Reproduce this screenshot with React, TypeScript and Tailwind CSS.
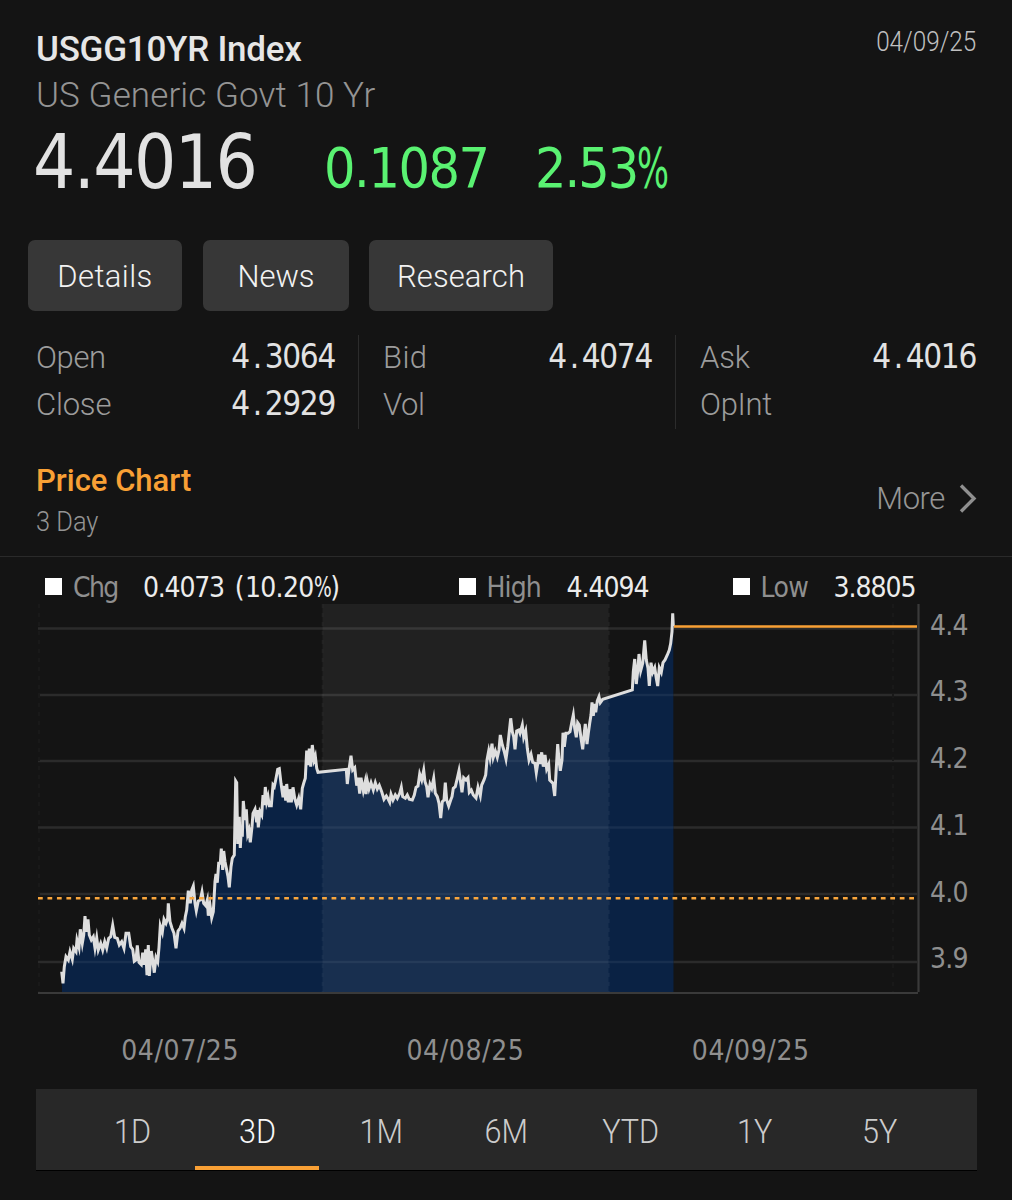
import type { ReactNode } from 'react';

const din = 'font-[Roboto,sans-serif]';
const num = "font-['DejaVu_Sans_Condensed','DejaVu_Sans',sans-serif]";

const BASE_Y = 992;

const raw: [number, number, string][] = [
  [30, 860, '95,335 99,370 103,320 108,290 115,300 120,275 127,298 131,265 138,275 141,240 147,262 151,208 157,250 161,225 165,168 169,215 174,178 178,225 184,240 190,230 195,264 200,233 205,270 212,250 218,270 224,245 230,264 236,235 242,230 248,196 254,232 262,235 268,255 275,245 282,265 288,220 296,220 302,260 308,268 313,304 318,300 322,256 327,307 334,314 338,278 343,314 347,268 351,346 355,255 358,348 364,273 368,300 373,338 378,293 383,305 387,262 391,198 397,217 402,178 408,190 413,175 415,130 420,185 426,205 432,220 438,265 444,213 450,205 456,190 462,205 466,170 470,150 475,92 481,130 485,90 490,78 495,130 499,152 505,123 511,120 516,96 521,130 527,137 532,120 535,167 540,135 545,173 550,155'],
  [180, 730, '105,455 108,432 112,458 116,400 121,400 124,356 128,420 131,363 135,395 140,420 144,440 148,472 153,410 157,385 163,375 167,153 170,158 173,342 178,260 181,354 184,300 187,320 190,213 195,270 199,238 203,312 207,300 211,337 216,290 219,250 225,238 230,277 232,240 235,292 240,245 245,255 249,195 253,225 256,171 260,215 264,200 268,227 274,227 279,165 283,170 287,150 293,118 298,116 303,160 309,202 313,168 317,212 320,162 325,217 329,178 334,217 339,172 344,205 350,225 356,205 362,238 367,175 371,160 376,145 380,62 384,105 388,56 392,110 397,45 402,90 406,78 410,115 414,127'],
  [320, 700, '79,208 82,252 86,215 93,167 98,210 104,203 110,257 114,233 119,281 123,233 130,272 135,248 138,282 142,243 147,267 153,248 160,270 166,248 172,267 178,256 185,275 192,298 199,288 205,298 209,307 213,283 219,300 226,285 232,295 239,280 244,262 248,290 256,295 262,285 268,298 277,300 283,285 288,262 294,258 299,222 305,240 311,211 315,245 320,260 324,292 330,253 335,265 341,235 346,280 352,290 357,310 362,354 367,305 372,300 376,248 380,300 386,318 392,300 396,290 400,265 406,260 412,235 417,212 421,240 426,277 431,233 438,240 444,233 448,277 454,270 460,285 468,294 474,262 481,287 485,255 492,240 497,225 501,180 506,153 510,174 516,131 520,172 526,153 532,172 537,150 541,105 547,135 553,155 558,177 563,140 568,95 572,55 577,95 581,110 585,148 590,93 596,90 600,100 607,75 611,112 617,93 622,145 627,180 633,163 638,187 645,190 649,218 654,185'],
  [480, 600, '176,463 181,492 185,457 190,500 195,465 200,507 206,493 209,540 214,545 219,550 224,588 228,520 233,432 237,480 241,512 246,480 249,398 253,440 258,400 264,400 270,395 275,368 280,345 284,385 289,412 293,368 298,375 303,415 308,448 313,398 316,372 321,432 325,400 329,370 333,345 336,307 340,347 344,312 347,337 352,303 357,290 361,308 368,298 457,270 460,215 464,177 469,252 473,213 477,162 482,212 488,190 494,121 499,180 504,205 508,258 513,188 518,217 524,203 529,235 533,258 538,203 544,217 549,188 555,180 562,165 568,150 572,130 576,95 578,40 580,78'],
];

const line = raw
  .flatMap(([ox, oy, s]) =>
    s.split(' ').map((p) => {
      const [x, y] = p.split(',').map(Number);
      return `${(ox + x / 3).toFixed(1)},${(oy + y / 3).toFixed(1)}`;
    }),
  )
  .join(' ');

const area = `62,${BASE_Y} ${line} 673.5,${BASE_Y}`;
const gridY = [628.5, 695, 761, 827.5, 894, 962];
const axis = ['4.4', '4.3', '4.2', '4.1', '4.0', '3.9'];

function Chart() {
  return (
    <svg viewBox="36 604 884 391" className="block h-[391px] w-[884px] shrink-0">
      <clipPath id="area">
        <polygon points={area} />
      </clipPath>
      {gridY.map((y) => (
        <line key={y} x1="38" x2="917" y1={y} y2={y} stroke="#fff" strokeOpacity="0.1" strokeWidth="2.4" />
      ))}
      <polygon points={area} fill="#0a2244" />
      <g clipPath="url(#area)">
        {gridY.map((y) => (
          <line key={y} x1="62" x2="673.5" y1={y} y2={y} stroke="#fff" strokeOpacity="0.06" strokeWidth="2.4" />
        ))}
      </g>
      <rect x="322.5" y="604" width="286" height="388" fill="#fff" fillOpacity="0.06" />
      {[39, 893].map((x) => (
        <line key={x} x1={x} x2={x} y1="604" y2="992" stroke="#191919" strokeWidth="2" strokeDasharray="4 5" />
      ))}
      {[322.5, 609].map((x) => (
        <line key={x} x1={x} x2={x} y1="604" y2="992" stroke="#fff" strokeOpacity="0.035" strokeWidth="2" strokeDasharray="4 5" />
      ))}
      <line x1="38" x2="918" y1="993" y2="993" stroke="#3a3a3a" strokeWidth="2.2" />
      <line x1="918.5" x2="918.5" y1="604" y2="992" stroke="#3a3a3a" strokeWidth="2.2" />
      <polyline points={line} fill="none" stroke="#dedede" strokeWidth="3" strokeMiterlimit="7" />
      <line x1="674" x2="917" y1="626.5" y2="626.5" stroke="#f9a035" strokeWidth="2.6" />
      <line x1="38" x2="914" y1="898.3" y2="898.3" stroke="#f9a63c" strokeWidth="2.6" strokeDasharray="4.75 4.72" />
    </svg>
  );
}

function Button({ className, children }: { className: string; children: ReactNode }) {
  return (
    <button className={`${className} flex h-[70.5px] items-center justify-center rounded-[7px] bg-[#373737] pt-[2px] text-[31px] font-light text-[#f2f2f2]`}>
      {children}
    </button>
  );
}

function Quote({ value }: { value: string }) {
  const [whole, frac] = value.split('.');
  return (
    <span className={`${num} pb-[3px] text-[33px] tracking-[-1.3px] text-[#e2e2e2]`}>
      {whole}
      <span className="px-[3.9px]">.</span>
      {frac}
    </span>
  );
}

function Stat({ label, tracking, value }: { label: string; tracking: string; value?: string }) {
  return (
    <div className="flex h-[47px] items-center justify-between">
      <span className={`${tracking} pb-px text-[31px] font-light text-[#9c9c9c]`}>{label}</span>
      {value && <Quote value={value} />}
    </div>
  );
}

function Legend({ label, labelClass, children }: { label: string; labelClass: string; children: ReactNode }) {
  return (
    <div className="flex h-[34px] items-center">
      <span className="size-[17px] bg-white" />
      <span className={`${labelClass} ml-[11px] pt-[2px] text-[#8f8f8f]`}>{label}</span>
      <span className="pt-[2px] whitespace-nowrap text-[#ececec]">{children}</span>
    </div>
  );
}

const ranges = ['1D', '3D', '1M', '6M', 'YTD', '1Y', '5Y'];

export default function App() {
  return (
    <div className={`${din} h-[1200px] w-[1012px] overflow-hidden bg-[#141414] pt-[25px] leading-none`}>
      <header className="flex justify-between pr-[36px] pl-[36px]">
        <div>
          <h1 className="flex h-[47px] items-center pt-px text-[35px] font-medium tracking-[-0.25px] text-[#e6e6e6]">USGG10YR Index</h1>
          <p className="flex h-[47px] items-center text-[35px] font-light tracking-[0.1px] text-[#949494]">US Generic Govt 10 Yr</p>
        </div>
        <time className="flex h-[34px] origin-right scale-x-[.9] items-center text-[27px] font-light text-[#c0c0c0]">04/09/25</time>
      </header>

      <div className={`${num} mt-[3px] flex h-[80px] items-center pl-[33px]`}>
        <span className="w-[291px] text-[74px] tracking-[-1.6px] text-[#e2e2e2]">4.4016</span>
        <span className="w-[211px] pt-[13px] text-[55px] tracking-[-1.4px] text-[#5af272]">0.1087</span>
        <span className="pt-[13px] text-[55px] tracking-[-2px] whitespace-nowrap text-[#5af272]">
          2.53<span className="inline-block origin-left scale-x-[.68]">%</span>
        </span>
      </div>

      <div className="mt-[38px] flex pl-[28px]">
        <Button className="w-[154px] tracking-[0.4px]">Details</Button>
        <Button className="ml-[21px] w-[146px]">News</Button>
        <Button className="ml-[20px] w-[184px] tracking-[0.1px]">Research</Button>
      </div>

      <div className="mt-[24px] flex pr-[36px] pl-[36px]">
        <div className="w-[323px] border-r border-[#2c2c2c] pr-[23px]">
          <Stat label="Open" tracking="tracking-[-0.4px]" value="4.3064" />
          <Stat label="Close" tracking="tracking-[-0.2px]" value="4.2929" />
        </div>
        <div className="w-[317px] border-r border-[#2c2c2c] pr-[23px] pl-[24px]">
          <Stat label="Bid" tracking="tracking-[0.4px]" value="4.4074" />
          <Stat label="Vol" tracking="tracking-[-0.4px]" />
        </div>
        <div className="w-[300px] pl-[24px]">
          <Stat label="Ask" tracking="tracking-[-0.2px]" value="4.4016" />
          <Stat label="OpInt" tracking="tracking-[-0.3px]" />
        </div>
      </div>

      <div className="mt-[34px] flex h-[94px] items-start justify-between border-b border-[#2a2a2a] pr-[35px] pl-[36px]">
        <div>
          <h2 className="flex h-[35px] items-center text-[31px] font-medium text-[#f9a035]">Price Chart</h2>
          <p className="mt-[8px] flex h-[34px] origin-left scale-x-[.94] items-center text-[27px] font-light text-[#949494]">3 Day</p>
        </div>
        <div className="mt-[18px] flex h-[35px] items-center">
          <span className="text-[31px] font-light tracking-[-0.4px] text-[#969696]">More</span>
          <svg viewBox="0 0 18 29" className="ml-[14px] h-[29px] w-[18px]" fill="none" stroke="#8f8f8f" strokeWidth="3.4">
            <path d="M2 1.5 15 14.5 2 27.5" />
          </svg>
        </div>
      </div>

      <div className={`${num} flex pt-[13px] pl-[45px] text-[28px]`}>
        <div className="w-[413.5px]">
          <Legend label="Chg" labelClass="w-[70px] tracking-[-1.7px]">
            <span className="tracking-[-1.2px] [word-spacing:4px]">
              0.4073 <span className="tracking-[0.4px]">(</span>
              <span className="tracking-[-0.7px]">10.20</span>
              <span className="-mr-[6px] inline-block origin-left scale-x-[.74]">%</span>)
            </span>
          </Legend>
        </div>
        <div className="w-[274px]">
          <Legend label="High" labelClass="w-[80px] tracking-[-0.9px]">
            <span className="tracking-[-1px]">4.4094</span>
          </Legend>
        </div>
        <Legend label="Low" labelClass="w-[73px] tracking-[-0.6px]">
          <span className="tracking-[-1px]">3.8805</span>
        </Legend>
      </div>

      <div className="flex h-[391px] pl-[36px]">
        <Chart />
        <div className={`${num} flex flex-col pt-[5px] pl-[10px] text-[28px] tracking-[-0.8px] text-[#8f8f8f]`}>
          {axis.map((a) => (
            <span key={a} className="flex h-[66.8px] shrink-0 items-start pt-[3px]">{a}</span>
          ))}
        </div>
      </div>

      <div className={`${num} mt-[38px] flex h-[34px] items-center pt-[3px] pl-[37.5px] text-[28px] tracking-[0.6px] text-[#8f8f8f]`}>
        {['04/07/25', '04/08/25', '04/09/25'].map((d) => (
          <span key={d} className="w-[285.3px] text-center">{d}</span>
        ))}
      </div>

      <nav className="mx-[35.5px] mt-[22px] flex h-[82px] justify-center border-b border-black bg-[#282828]">
        {ranges.map((r) => (
          <button
            key={r}
            className={
              r === '3D'
                ? 'flex h-[81.5px] w-[124.4px] items-center justify-center border-b-[4.5px] border-[#f9a035] pt-[8px] text-[34px] font-light text-[#f8f8f8]'
                : 'flex h-[81.5px] w-[124.4px] items-center justify-center pt-[4px] text-[34px] font-light text-[#cccccc]'
            }
          >
            <span className="inline-block scale-x-[.9]">{r}</span>
          </button>
        ))}
      </nav>
    </div>
  );
}
